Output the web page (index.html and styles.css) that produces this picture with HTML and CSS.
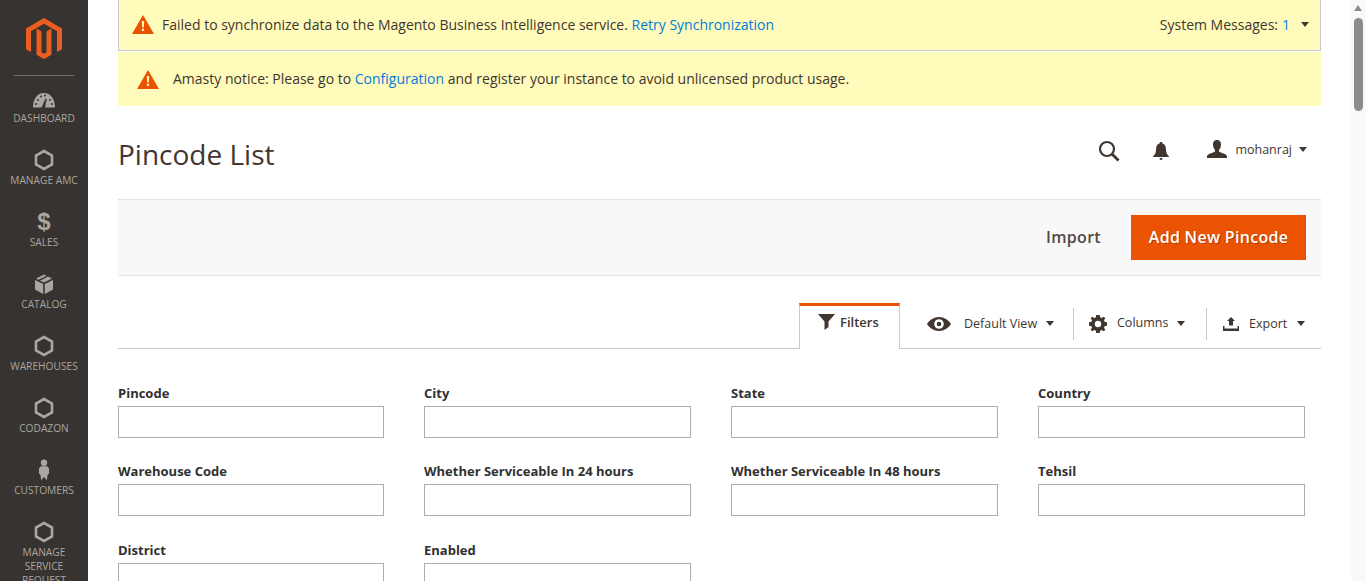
FILE: index.html
```html
<!DOCTYPE html>
<html lang="en">

<head>
    <meta charset="UTF-8">
    <meta name="viewport" content="width=device-width, initial-scale=1.0">
    <title>Pincode List</title>
    <link rel="stylesheet" href="styles.css">
</head>

<body>
    <div class="shell">
        <nav class="sidebar">
            <div class="logo">
                <svg width="36" height="42" viewBox="0 0 36 42"><path fill="#eb5d20" d="M18 0 36 10.400V31.200L31 34.100V13.300L18 5.800 5 13.300V34.100L0 31.200V10.400Z"/><path fill="#eb5d20" d="M15.500 13.500V34.200L18 35.700 20.500 34.200V13.500L25.500 10.600V36.700L18 41 10.500 36.700V10.600Z"/></svg>
            </div>
            <ul class="nav-list">
                <li class="nav-item">
                    <svg class="nav-icon" width="24" height="20" viewBox="0 0 24 20"><path fill="#aaa6a0" d="M12 2C5.500 2 1 7.500 1 16.500H9.500L13.500 7.500 14.800 8 13 16.500H23C23 7.500 18.500 2 12 2Z"/><circle cx="6" cy="9" r="1" fill="#373330"/><circle cx="9" cy="5.500" r="1" fill="#373330"/><circle cx="13" cy="4.500" r="1" fill="#373330"/><circle cx="18" cy="9" r="1" fill="#373330"/><circle cx="4" cy="13" r="1" fill="#373330"/><circle cx="20" cy="13" r="1" fill="#373330"/></svg>
                    <span>Dashboard</span>
                </li>
                <li class="nav-item">
                    <svg class="nav-icon" width="20" height="22" viewBox="0 0 20 22"><path class="hex" d="M10 2 18 6.500V15.500L10 20 2 15.500V6.500Z"/></svg>
                    <span>Manage AMC</span>
                </li>
                <li class="nav-item">
                    <b class="nav-icon nav-dollar">$</b>
                    <span>Sales</span>
                </li>
                <li class="nav-item">
                    <svg class="nav-icon" width="20" height="22" viewBox="0 0 20 22"><path fill="#aaa6a0" d="M1 7 9.200 11V21L1 16.500ZM19 7 10.800 11V21L19 16.500ZM10 1.500 12.500 2.800 4.500 6.800 2 5.500ZM14 3.600 18 5.500 10 9.600 6 7.700Z"/></svg>
                    <span>Catalog</span>
                </li>
                <li class="nav-item">
                    <svg class="nav-icon" width="20" height="22" viewBox="0 0 20 22"><path class="hex" d="M10 2 18 6.500V15.500L10 20 2 15.500V6.500Z"/></svg>
                    <span>Warehouses</span>
                </li>
                <li class="nav-item">
                    <svg class="nav-icon" width="20" height="22" viewBox="0 0 20 22"><path class="hex" d="M10 2 18 6.500V15.500L10 20 2 15.500V6.500Z"/></svg>
                    <span>Codazon</span>
                </li>
                <li class="nav-item">
                    <svg class="nav-icon" width="14" height="24" viewBox="0 0 14 24"><circle cx="7" cy="4" r="3.500" fill="#aaa6a0"/><path fill="#aaa6a0" d="M3.500 8H10.500L12.500 10V16L11 17 10 23.500 7.500 20 6.500 20 4 23.500 3 17 1.500 16V10Z"/></svg>
                    <span>Customers</span>
                </li>
                <li class="nav-item nav-item-long">
                    <svg class="nav-icon" width="20" height="22" viewBox="0 0 20 22"><path class="hex" d="M10 2 18 6.500V15.500L10 20 2 15.500V6.500Z"/></svg>
                    <span>Manage Service Request</span>
                </li>
            </ul>
        </nav>

        <main class="content">
            <div class="notice notice-system">
                <svg class="warn" width="22" height="19" viewBox="0 0 22 19"><path fill="#eb5202" d="M11 0 22 19H0Z"/><path fill="#fffbbb" d="M9.800 6H12.200L11.800 12.500H10.200ZM9.900 13.700H12.100V16H9.900Z"/></svg>
                <p class="notice-text">Failed to synchronize data to the Magento Business Intelligence service. <a href="#">Retry Synchronization</a></p>
                <div class="system-count">System Messages: <a href="#">1</a><i class="caret caret-system"></i></div>
            </div>
            <div class="notice notice-amasty">
                <svg class="warn" width="22" height="19" viewBox="0 0 22 19"><path fill="#eb5202" d="M11 0 22 19H0Z"/><path fill="#fffbbb" d="M9.800 6H12.200L11.800 12.500H10.200ZM9.900 13.700H12.100V16H9.900Z"/></svg>
                <p class="notice-text">Amasty notice: Please go to <a href="#">Configuration</a> and register your instance to avoid unlicensed product usage.</p>
            </div>

            <header class="page-header">
                <h1>Pincode List</h1>
                <div class="header-tools">
                    <svg class="tool-search" width="22" height="22" viewBox="0 0 22 22"><circle cx="9" cy="9" r="7" fill="none" stroke="#41362f" stroke-width="2.200"/><path stroke="#41362f" stroke-width="2.800" d="M14 14 20.500 20.500"/></svg>
                    <svg class="tool-bell" width="16" height="18" viewBox="0 0 16 18"><path fill="#41362f" d="M8 0C9 0 9.500 .7 9.500 1.500 12 2.300 13 4.500 13 7.500 13 11 14 12.500 16 14.500V15H0V14.500C2 12.500 3 11 3 7.500 3 4.500 4 2.300 6.500 1.500 6.500 .7 7 0 8 0ZM6.500 16H9.500C9.500 17 9 18 8 18S6.500 17 6.500 16Z"/></svg>
                    <div class="user">
                        <svg width="20" height="18" viewBox="0 0 20 18"><path fill="#41362f" d="M10 0C13 0 14 2.200 14 4.500 14 7 13 9 12 10V11.500C14 13 19 13.500 20 16V18H0V16C1 13.500 6 13 8 11.500V10C7 9 6 7 6 4.500 6 2.200 7 0 10 0Z"/></svg>
                        <span>mohanraj</span>
                        <i class="caret"></i>
                    </div>
                </div>
            </header>

            <div class="actions">
                <button type="button" class="btn-plain">Import</button>
                <button type="button" class="btn-primary">Add New Pincode</button>
            </div>

            <div class="toolbar">
                <div class="tab-filters">
                    <svg width="17" height="16" viewBox="0 0 17 16"><path fill="#41362f" d="M0 0H17L10.500 7.500V13L6.500 16V7.500Z"/></svg>
                    <span>Filters</span>
                </div>
                <div class="tool tool-view">
                    <svg width="24" height="14" viewBox="0 0 24 14"><path fill="#41362f" fill-rule="evenodd" d="M12 0C17 0 21.500 3 24 7 21.500 11 17 14 12 14S2.500 11 0 7C2.500 3 7 0 12 0ZM12 2.200A4.800 4.800 0 1 0 12 11.800 4.800 4.800 0 1 0 12 2.200ZM12 4.700A2.300 2.300 0 1 1 12 9.300 2.300 2.300 0 1 1 12 4.700Z"/></svg>
                    <span>Default View</span>
                    <i class="caret"></i>
                </div>
                <div class="tool tool-columns">
                    <svg width="18" height="18" viewBox="0 0 18 18"><path fill="#41362f" fill-rule="evenodd" d="M7.200 0H10.800L11.300 2.400 12.700 3 14.800 1.700 16.300 3.200 15 5.300 15.600 6.700 18 7.200V10.800L15.600 11.300 15 12.700 16.300 14.800 14.800 16.300 12.700 15 11.300 15.600 10.800 18H7.200L6.700 15.600 5.300 15 3.200 16.300 1.700 14.800 3 12.700 2.400 11.300 0 10.800V7.200L2.400 6.700 3 5.300 1.700 3.200 3.200 1.700 5.300 3 6.700 2.400ZM9 5.800A3.200 3.200 0 1 0 9 12.200 3.200 3.200 0 1 0 9 5.800Z"/></svg>
                    <span>Columns</span>
                    <i class="caret"></i>
                </div>
                <div class="tool tool-export">
                    <svg width="18" height="15" viewBox="0 0 18 15"><path fill="#41362f" d="M9 1 13 5H11V9.500H7V5H5ZM1 10H2.500V12.500H15.500V10H17V15H1Z"/></svg>
                    <span>Export</span>
                    <i class="caret"></i>
                </div>
            </div>

            <form class="filters">
                <label class="field">Pincode<input type="text"></label>
                <label class="field">City<input type="text"></label>
                <label class="field">State<input type="text"></label>
                <label class="field">Country<input type="text"></label>
                <label class="field">Warehouse Code<input type="text"></label>
                <label class="field">Whether Serviceable In 24 hours<input type="text"></label>
                <label class="field">Whether Serviceable In 48 hours<input type="text"></label>
                <label class="field">Tehsil<input type="text"></label>
                <label class="field">District<input type="text"></label>
                <label class="field">Enabled<input type="text"></label>
            </form>
        </main>

        <div class="scrollbar">
            <i class="scroll-up"></i>
            <div class="scroll-thumb"></div>
        </div>
    </div>
</body>

</html>
```

FILE: styles.css
```css
/* General Styles */
html, body {
    height: 100%;
    margin: 0;
    overflow: hidden;
}

body {
    font-family: "Open Sans", sans-serif;
    font-size: 14px;
    color: #41362f;
    background-color: #fff;
}

a {
    color: #007bdb;
    text-decoration: none;
}

.shell {
    display: flex;
    height: 100vh;
    overflow: hidden;
}

/* Sidebar */
.sidebar {
    flex: 0 0 88px;
    background-color: #373330;
}

.logo {
    display: flex;
    justify-content: center;
    height: 57px;
    padding-top: 18px;
    margin: 0 14px;
    border-bottom: 1px solid #736f6b;
}

.nav-list {
    list-style: none;
    margin: 0;
    padding: 0;
}

.nav-item {
    display: flex;
    flex-direction: column;
    align-items: center;
    height: 62px;
    padding-top: 15px;
    box-sizing: border-box;
    font-size: 10.2px;
    line-height: 14px;
    text-align: center;
    text-transform: uppercase;
    color: #aaa6a0;
}

.nav-item:first-child {
    padding-top: 14px;
    height: 58px;
}

.nav-item-long span {
    width: 62px;
}

.nav-icon {
    flex-shrink: 0;
    height: 22px;
    margin-bottom: 2px;
}

.nav-item:first-child .nav-icon {
    margin-bottom: -1px;
}

.nav-dollar {
    font-family: "Liberation Sans", sans-serif;
    font-size: 24px;
    line-height: 22px;
}

.hex {
    fill: none;
    stroke: #aaa6a0;
    stroke-width: 2.600;
}

/* Main */
.content {
    flex: 1;
    min-width: 0;
    padding: 0 30px;
}

.notice {
    display: flex;
    align-items: center;
    background-color: #fffbbb;
}

.notice-text {
    margin: 0;
    flex: 1;
}

.notice-system {
    padding: 0 11px 2px 13px;
    border: 1px solid #cacaca;
    border-top: none;
    box-sizing: border-box;
    height: 51px;
}

.notice-system .warn {
    margin-right: 8px;
}

.notice-amasty {
    height: 54px;
    margin-top: 1px;
    padding-left: 19px;
}

.notice-amasty .warn {
    margin-right: 14px;
}

.notice-amasty .notice-text {
    padding-bottom: 2px;
}

.system-count {
    display: flex;
    align-items: center;
    gap: 4px;
}

.caret {
    display: inline-block;
    width: 0;
    height: 0;
    border-left: 4px solid transparent;
    border-right: 4px solid transparent;
    border-top: 5px solid #41362f;
}

.caret-system {
    margin-left: 7px;
}

.page-header {
    display: flex;
    align-items: center;
    justify-content: space-between;
    height: 93px;
}

h1 {
    margin: 0;
    font-size: 28px;
    font-weight: 400;
    line-height: 36px;
    color: #41362f;
    padding-top: 3px;
}

.header-tools {
    display: flex;
    align-items: center;
    margin-bottom: 3px;
    padding-right: 14px;
}

.tool-bell {
    margin-left: 33px;
}

.user {
    display: flex;
    align-items: center;
    margin-left: 38px;
    margin-bottom: 4px;
    font-size: 12.500px;
}

.user span {
    margin: 0 7px 0 8px;
}

.actions {
    display: flex;
    justify-content: flex-end;
    align-items: center;
    height: 75px;
    padding-right: 15px;
    background-color: #f8f8f8;
    border-top: 1px solid #e3e3e3;
    border-bottom: 1px solid #e3e3e3;
}

button {
    font-family: inherit;
    font-size: 16px;
    font-weight: 600;
    letter-spacing: .3px;
    border: none;
    cursor: pointer;
}

.btn-plain {
    background: none;
    color: #514943;
    padding: 0 0 2px;
    margin-right: 30px;
}

.btn-primary {
    width: 175px;
    height: 45px;
    padding: 0 0 2px;
    background-color: #eb5202;
    color: #fff;
    text-shadow: 1px 1px 0 rgba(0, 0, 0, .25);
}

/* Grid toolbar */
.toolbar {
    display: flex;
    align-items: center;
    height: 46px;
    margin-top: 26px;
    padding-left: 681px;
    border-bottom: 1px solid #cacaca;
}

.tab-filters {
    display: flex;
    align-items: center;
    gap: 5px;
    box-sizing: border-box;
    width: 101px;
    height: 46px;
    padding: 0 0 11px 18px;
    margin-bottom: -1px;
    align-self: flex-end;
    background-color: #fff;
    border: 1px solid #cacaca;
    border-top: 3px solid #eb5202;
    border-bottom: none;
    font-size: 13px;
    font-weight: 600;
}

.tool {
    display: flex;
    align-items: center;
    font-size: 12.500px;
    height: 32px;
    margin-top: -3px;
}

.tool-view {
    width: 173px;
    padding-left: 27px;
    box-sizing: border-box;
}

.tool-view span {
    margin: 0 9px 0 13px;
}

.tool-columns {
    width: 133px;
    padding-left: 15px;
    box-sizing: border-box;
    border-left: 1px solid #cacaca;
}

.tool-columns span {
    margin: -2px 9px 0 10px;
}

.tool-export {
    padding-left: 15px;
    border-left: 1px solid #cacaca;
}

.tool-export span {
    margin: 0 10px 0 9px;
}

/* Filters */
.filters {
    display: grid;
    grid-template-columns: 266px 267px 267px 267px;
    column-gap: 40px;
    row-gap: 24.400px;
    margin-top: 35px;
}

.field {
    display: block;
    font-size: 13px;
    font-weight: 700;
    line-height: 18px;
    color: #303030;
}

.field input {
    display: block;
    width: 100%;
    height: 32px;
    box-sizing: border-box;
    margin-top: 4px;
    border: 1px solid #adadad;
    background-color: #fff;
}

/* Fake page scrollbar */
.scrollbar {
    flex: 0 0 15px;
    position: relative;
    background-color: #f9f9f9;
}

.scroll-up {
    position: absolute;
    top: 5px;
    left: 3px;
    width: 0;
    height: 0;
    border-left: 4.500px solid transparent;
    border-right: 4.500px solid transparent;
    border-bottom: 6px solid #8c8c8c;
}

.scroll-thumb {
    position: absolute;
    top: 18px;
    left: 3px;
    width: 9px;
    height: 93px;
    border-radius: 5px;
    background-color: #8c8c8c;
}
```
